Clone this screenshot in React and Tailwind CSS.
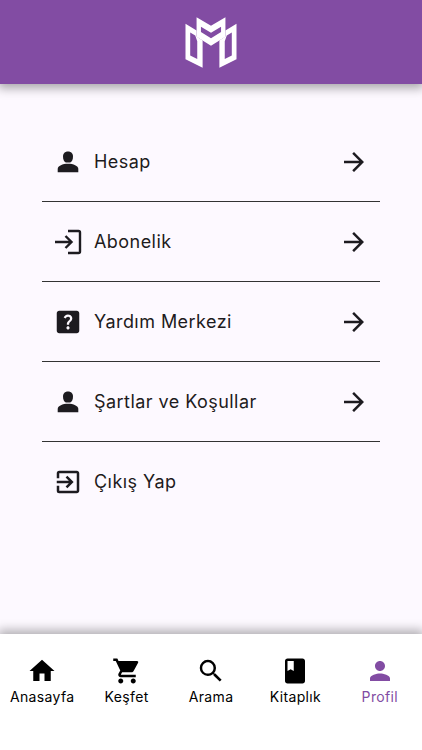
import {
  MdArrowForward,
  MdBook,
  MdExitToApp,
  MdHelpCenter,
  MdHome,
  MdPerson,
  MdSearch,
  MdShoppingCart,
} from "react-icons/md";

const MENU_ITEMS = [
  { label: "Hesap", icon: UserIcon, hasArrow: true },
  { label: "Abonelik", icon: LoginIcon, hasArrow: true },
  { label: "Yardım Merkezi", icon: MdHelpCenter, hasArrow: true },
  { label: "Şartlar ve Koşullar", icon: UserIcon, hasArrow: true },
  { label: "Çıkış Yap", icon: MdExitToApp, hasArrow: false },
];

const NAV_ITEMS = [
  { label: "Anasayfa", icon: MdHome },
  { label: "Keşfet", icon: MdShoppingCart },
  { label: "Arama", icon: MdSearch },
  { label: "Kitaplık", icon: MdBook },
  { label: "Profil", icon: MdPerson, active: true },
];

function App() {
  return (
    <div className="flex min-h-screen flex-col bg-[#fdf9ff] font-['Inter',sans-serif] text-[#1d1b20]">
      <header className="flex h-[84px] items-center justify-center bg-[#824ca3] shadow-[0_2px_10px_2px_rgba(0,0,0,0.35)]">
        <Logo />
      </header>

      <main className="flex-1 px-[42px] pt-[38px]">
        <ul className="divide-y divide-[#333]">
          {MENU_ITEMS.map(({ label, icon: Icon, hasArrow }) => (
            <li key={label}>
              <button
                type="button"
                className="flex h-[79px] w-full items-center gap-[11px] px-[11px] text-left"
              >
                <Icon className="size-[30px] shrink-0" />
                <span className="flex-1 text-lg tracking-wide">{label}</span>
                {hasArrow && <MdArrowForward className="size-[30px] shrink-0" />}
              </button>
            </li>
          ))}
        </ul>
      </main>

      <nav className="flex h-[116px] bg-white pt-[22px] shadow-[0_-2px_10px_2px_rgba(0,0,0,0.3)]">
        {NAV_ITEMS.map(({ label, icon: Icon, active }) => (
          <a
            key={label}
            href="#"
            className={`flex flex-1 flex-col items-center text-sm/[22px] tracking-wide ${
              active ? "text-[#824ca3]" : "text-black"
            }`}
          >
            <Icon className="size-[30px]" />
            {label}
          </a>
        ))}
      </nav>
    </div>
  );
}

function Logo() {
  return (
    <svg viewBox="46 50 154 152" className="h-[51px] w-[52px]" fill="#fff" role="img" aria-label="Logo">
      <path
        fillRule="evenodd"
        d="M47 70 80 90V108L98 120V201L47 176ZM61 96V165L82 175V122L76 105Z"
      />
      <path
        fillRule="evenodd"
        d="M199 70 166 90V108L148 120V201L199 176ZM185 96V165L164 175V122L170 105Z"
      />
      <path
        fillRule="evenodd"
        d="M80 51 123 76 166 51V109L123 136 80 109ZM93 79V95L123 113 153 95V79L123 97Z"
      />
    </svg>
  );
}

function UserIcon({ className }) {
  return (
    <svg viewBox="0 0 30 30" className={className} fill="currentColor" aria-hidden="true">
      <path d="M15 4.500c-3.400 0-5 2.200-5 5 0 3 1.200 5.600 2.800 5.900h4.400c1.600-.3 2.800-2.900 2.800-5.900 0-2.800-1.600-5-5-5Z" />
      <path d="M4.700 25.300v-3.200c0-3.400 5-5.300 10.300-5.300s10.300 1.900 10.300 5.300v3.200Z" />
    </svg>
  );
}

function LoginIcon({ className }) {
  return (
    <svg
      viewBox="0 0 30 30"
      className={className}
      fill="none"
      stroke="currentColor"
      strokeWidth="2.400"
      aria-hidden="true"
    >
      <path d="M15 4h10.500a1.500 1.500 0 0 1 1.500 1.500v19a1.500 1.500 0 0 1-1.500 1.500H15M2 15h17M12.500 9l6 6-6 6" />
    </svg>
  );
}

export default App;
